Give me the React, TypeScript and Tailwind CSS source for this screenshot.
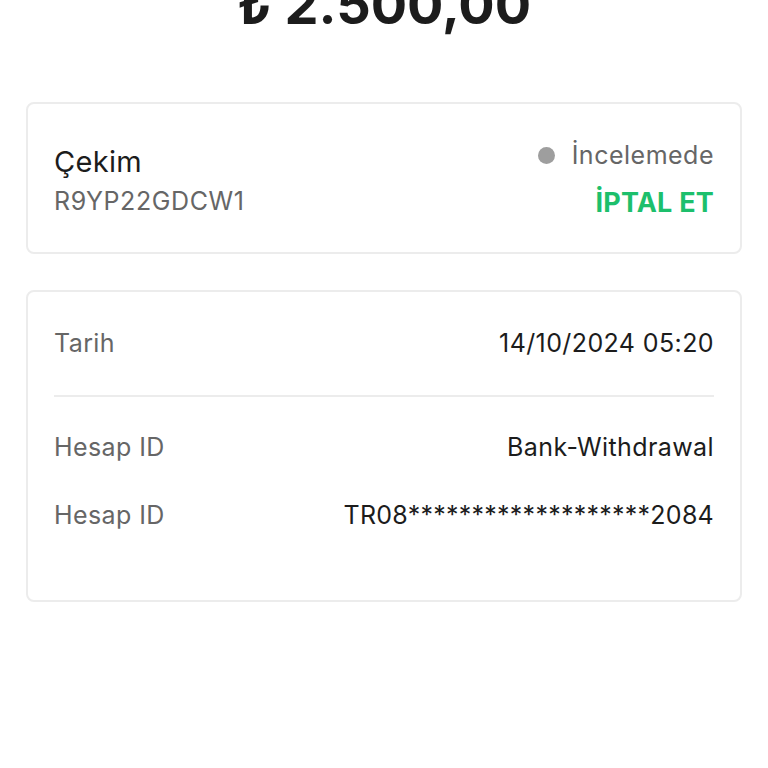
import React from "react";

export default function App() {
  return (
    <div
      className="min-h-[768px] w-[768px] bg-white overflow-hidden"
      style={{ fontFamily: "Inter, 'Noto Sans', sans-serif" }}
    >
      <div className="h-[102px] flex justify-center">
        <div className="mt-[-25px] text-[54px] leading-[60px] font-bold text-[#1c1c1c]">
          ₺ 2.500,00
        </div>
      </div>
      <div className="px-[26px] flex flex-col gap-[36px]">
        <div className="h-[152px] rounded-[8px] border-2 border-[#ececec] px-[26px] flex items-center justify-between">
          <div className="flex flex-col gap-[4px] pt-[6px]">
            <div className="text-[29px] leading-[36px] text-[#1c1c1c] tracking-[0.3px]">Çekim</div>
            <div className="text-[25px] leading-[34px] text-[#666666] tracking-[0.6px]">R9YP22GDCW1</div>
          </div>
          <div className="flex flex-col items-end gap-[16px] pt-[2px]">
            <div className="flex items-center gap-[17px]">
              <span className="w-[17px] h-[17px] rounded-full bg-[#9e9e9e]" />
              <span className="text-[25px] leading-[32px] text-[#666666] tracking-[0.5px]">İncelemede</span>
            </div>
            <div className="text-[27px] leading-[32px] font-bold text-[#1dbf6c] tracking-[0.2px]">İPTAL ET</div>
          </div>
        </div>
        <div className="h-[312px] rounded-[8px] border-2 border-[#ececec] px-[26px] pt-[36px] flex flex-col">
          <div className="flex justify-between items-center h-[32px] text-[25px] tracking-[0.4px]">
            <span className="text-[#666666]">Tarih</span>
            <span className="text-[#1c1c1c]">14/10/2024 05:20</span>
          </div>
          <div className="mt-[35px] h-[2px] bg-[#ececec]" />
          <div className="mt-[35px] flex justify-between items-center h-[32px] text-[25px] tracking-[0.4px]">
            <span className="text-[#666666]">Hesap ID</span>
            <span className="text-[#1c1c1c]">Bank-Withdrawal</span>
          </div>
          <div className="mt-[36px] flex justify-between items-center h-[32px] text-[25px] tracking-[0.4px]">
            <span className="text-[#666666]">Hesap ID</span>
            <span className="text-[#1c1c1c] tracking-[0.25px]">TR08*******************2084</span>
          </div>
        </div>
      </div>
    </div>
  );
}
